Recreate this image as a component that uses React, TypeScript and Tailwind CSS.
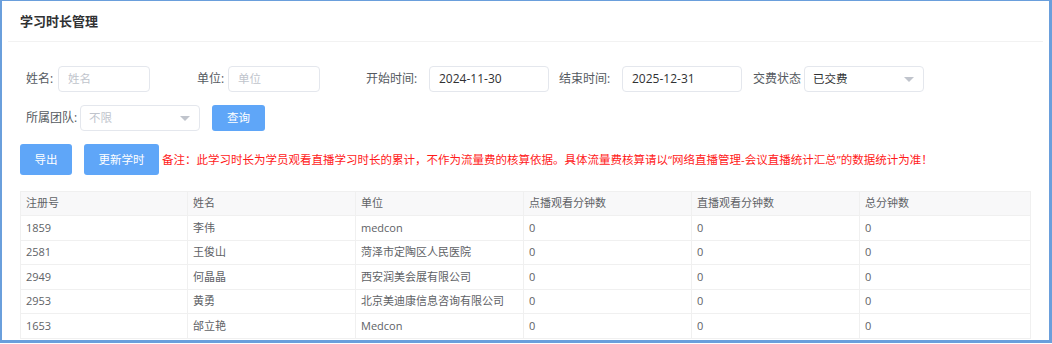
const rows = [
  { id: '1859', name: '李伟', unit: 'medcon' },
  { id: '2581', name: '王俊山', unit: '菏泽市定陶区人民医院' },
  { id: '2949', name: '何晶晶', unit: '西安润美会展有限公司' },
  { id: '2953', name: '黄勇', unit: '北京美迪康信息咨询有限公司' },
  { id: '1653', name: '邰立艳', unit: 'Medcon' },
]

const cols = ['注册号', '姓名', '单位', '点播观看分钟数', '直播观看分钟数', '总分钟数']

function Caret() {
  return (
    <svg width="10" height="6" viewBox="0 0 10 6" className="absolute right-[9px] top-[10px]">
      <path d="M0 0 L10 0 L5 5 Z" fill="#c0c4cc" />
    </svg>
  )
}

function Field({ label, w, value, placeholder, labelW }: { label: string; w: number; value?: string; placeholder?: string; labelW: number }) {
  return (
    <div className="flex items-center shrink-0">
      <span className="text-[12px] text-[#555a61] whitespace-nowrap shrink-0" style={{ width: labelW }}>{label}</span>
      <div
        className="h-[26px] shrink-0 rounded-[4px] border border-[#e4e7ed] flex items-center px-[9px] whitespace-nowrap"
        style={{ width: w }}
      >
        {value ? <span className="text-[12px] text-[#303133]">{value}</span> : <span className="text-[11.5px] text-[#c0c4cc]">{placeholder}</span>}
      </div>
    </div>
  )
}

export default function App() {
  return (
    <div
      className="w-[1052px] h-[343px] bg-white border-l-2 border-t border-r-[3px] border-b-[3px] border-[#6a9fdc] overflow-hidden"
      style={{ fontFamily: '"Open Sans", "Noto Sans CJK SC", "Noto Sans", sans-serif' }}
    >
      <div className="mx-[6px] h-[41px] border-b border-[#f2f2f2] flex items-center pl-[12px] pt-[1px]">
        <span className="text-[13px] font-bold text-[#303133]">学习时长管理</span>
      </div>

      <div className="pl-[24px] pt-[24px] flex items-center whitespace-nowrap">
        <Field label="姓名:" labelW={32} w={92} placeholder="姓名" />
        <div className="w-[47px] shrink-0" />
        <Field label="单位:" labelW={31} w={92} placeholder="单位" />
        <div className="w-[46px] shrink-0" />
        <Field label="开始时间:" labelW={63} w={120} value="2024-11-30" />
        <div className="w-[10px] shrink-0" />
        <Field label="结束时间:" labelW={63} w={120} value="2025-12-31" />
        <div className="w-[11px] shrink-0" />
        <span className="text-[12px] text-[#555a61] w-[51px] shrink-0">交费状态</span>
        <div className="relative shrink-0 h-[26px] w-[120px] rounded-[4px] border border-[#e4e7ed] flex items-center px-[8px] text-[11.5px] text-[#303133]">
          已交费
          <Caret />
        </div>
      </div>

      <div className="pl-[24px] pt-[13px] flex items-center whitespace-nowrap">
        <span className="text-[12px] text-[#555a61] w-[54px] shrink-0">所属团队:</span>
        <div className="relative shrink-0 h-[26px] w-[120px] rounded-[4px] border border-[#e4e7ed] flex items-center px-[8px] text-[11.5px] text-[#c0c4cc]">
          不限
          <Caret />
        </div>
        <button className="ml-[12px] h-[26px] w-[53px] rounded-[3px] bg-[#5fa6f8] text-white text-[11.5px]">查询</button>
      </div>

      <div className="pl-[18px] pt-[13px] flex items-center whitespace-nowrap">
        <button className="h-[31px] w-[52px] shrink-0 rounded-[3px] bg-[#5fa6f8] text-white text-[11.5px]">导出</button>
        <button className="ml-[12px] h-[31px] w-[75px] shrink-0 rounded-[3px] bg-[#5fa6f8] text-white text-[11.5px]">更新学时</button>
        <span className="ml-[3px] text-[11.5px] text-[#ff1a1a]">
          备注：此学习时长为学员观看直播学习时长的累计，不作为流量费的核算依据。具体流量费核算请以“网络直播管理-会议直播统计汇总”的数据统计为准！
        </span>
      </div>

      <div className="pl-[18px] pt-[16px]">
        <table className="w-[1011px] border-collapse text-[11px] text-[#606266] table-fixed">
          <thead>
            <tr className="bg-[#f8f8f9]">
              {cols.map((c, i) => (
                <th
                  key={c}
                  className="h-[24px] font-normal text-left pl-[5px] border border-[#f0f0f0]"
                  style={{ width: i === 5 ? 171 : i === 0 ? 167 : 168 }}
                >
                  {c}
                </th>
              ))}
            </tr>
          </thead>
          <tbody>
            {rows.map((r) => (
              <tr key={r.id}>
                <td className="h-[24.5px] pl-[5px] border border-[#f0f0f0]">{r.id}</td>
                <td className="pl-[5px] border border-[#f0f0f0]">{r.name}</td>
                <td className="pl-[5px] border border-[#f0f0f0]">{r.unit}</td>
                <td className="pl-[5px] border border-[#f0f0f0]">0</td>
                <td className="pl-[5px] border border-[#f0f0f0]">0</td>
                <td className="pl-[5px] border border-[#f0f0f0]">0</td>
              </tr>
            ))}
          </tbody>
        </table>
      </div>
    </div>
  )
}
